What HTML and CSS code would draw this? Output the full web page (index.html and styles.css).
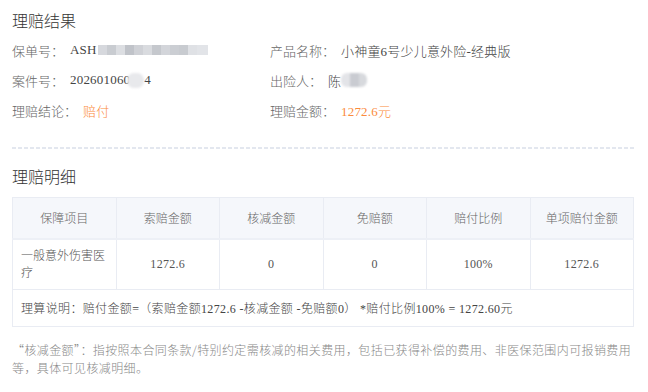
FILE: index.html
```html
<!DOCTYPE html>
<html lang="zh-CN">
<head>
<meta charset="utf-8">
<title>理赔结果</title>
<link rel="stylesheet" href="styles.css">
</head>
<body>
<div class="page">
  <h2 class="title">理赔结果</h2>
  <div class="info">
    <div class="item"><span class="label">保单号：</span><span class="value">ASH<span class="mosaic"></span></span></div>
    <div class="item"><span class="label">产品名称：</span><span class="value">小神童6号少儿意外险-经典版</span></div>
    <div class="item"><span class="label">案件号：</span><span class="value">202601060<span class="blob"></span>4</span></div>
    <div class="item"><span class="label">出险人：</span><span class="value">陈<span class="blur-name"></span></span></div>
    <div class="item"><span class="label">理赔结论：</span><span class="value orange">赔付</span></div>
    <div class="item"><span class="label">理赔金额：</span><span class="value orange">1272.6元</span></div>
  </div>
  <div class="divider"></div>
  <h2 class="title title-detail">理赔明细</h2>
  <table class="detail">
    <thead>
      <tr>
        <th>保障项目</th>
        <th>索赔金额</th>
        <th>核减金额</th>
        <th>免赔额</th>
        <th>赔付比例</th>
        <th>单项赔付金额</th>
      </tr>
    </thead>
    <tbody>
      <tr class="row">
        <td class="left">一般意外伤害医疗</td>
        <td>1272.6</td>
        <td>0</td>
        <td>0</td>
        <td>100%</td>
        <td>1272.6</td>
      </tr>
      <tr class="formula">
        <td colspan="6">理算说明：赔付金额=（索赔金额1272.6 -核减金额 -免赔额0） *赔付比例100% = 1272.60元</td>
      </tr>
    </tbody>
  </table>
  <p class="note">“核减金额”：指按照本合同条款/特别约定需核减的相关费用，包括已获得补偿的费用、非医保范围内可报销费用等，具体可见核减明细。</p>
</div>
</body>
</html>
```

FILE: styles.css
```css
html, body {
  margin: 0;
  padding: 0;
  background: #ffffff;
}

body {
  font-family: "Liberation Serif", "Noto Sans CJK SC", serif;
  font-weight: 300;
  color: #333333;
}

.page {
  padding: 10px 12px 0 12px;
  width: 624px;
}

.title {
  margin: 0;
  font-size: 16px;
  line-height: 24px;
  font-weight: 300;
  color: #333333;
}

.info {
  margin-top: 1px;
  display: grid;
  grid-template-columns: 258px 1fr;
  grid-auto-rows: 30px;
}

.item {
  display: flex;
  align-items: center;
  font-size: 13px;
  white-space: nowrap;
}

.label {
  color: #666666;
  margin-right: 6px;
}

.value {
  color: #444444;
  display: inline-flex;
  align-items: center;
  letter-spacing: 0.2px;
}

.orange {
  color: #fb8b3c;
}

.mosaic {
  display: inline-block;
  width: 110px;
  height: 10px;
  margin-left: 1px;
  background: linear-gradient(90deg,
    #d6d8dd 0 9px, #c9ccd1 9px 18px, #dcdee2 18px 27px, #c0c3c9 27px 36px,
    #cfd1d6 36px 45px, #d9dbdf 45px 54px, #c5c8cd 54px 63px, #d3d5da 63px 72px,
    #cbced3 72px 81px, #c8cbd0 81px 90px, #dfe1e5 90px 99px, #e2e4e8 99px 110px);
}

.blob {
  display: inline-block;
  width: 17px;
  height: 15px;
  margin-left: -3px;
  border-radius: 7px;
  background: #e8e9ec;
  filter: blur(1px);
}

.blur-name {
  display: inline-block;
  width: 26px;
  height: 14px;
  border-radius: 6px;
  background: linear-gradient(90deg, #e3e4e8 0 9px, #c9cbd1 9px 18px, #d7d9dd 18px 26px);
  filter: blur(1.2px);
}

.divider {
  margin-top: 22px;
  height: 2px;
  background: repeating-linear-gradient(90deg, #e3e7ef 0 4px, transparent 4px 6px);
}

.title-detail {
  margin-top: 17px;
}

.detail {
  margin-top: 7px;
  width: 622px;
  border-collapse: collapse;
  table-layout: fixed;
  font-size: 12px;
  color: #555555;
}

.detail th,
.detail td {
  border: 1px solid #e9ecf3;
  text-align: center;
  font-weight: 300;
  padding: 0 8px;
}

.detail th {
  height: 40px;
  background: #f5f7fb;
  color: #666666;
  border-bottom: 2px solid #edf0f6;
}

.detail .row td {
  height: 49px;
  line-height: 17px;
  letter-spacing: 0.3px;
}

.detail .row td.left {
  text-align: left;
  letter-spacing: 0;
}

.detail .formula td {
  height: 36px;
  text-align: left;
  padding-left: 8px;
  color: #444444;
  letter-spacing: 0.35px;
}

.note {
  margin: 14px 0 0 0;
  font-family: "Noto Sans CJK SC", "Liberation Serif", sans-serif;
  font-size: 12px;
  letter-spacing: 0.4px;
  line-height: 18px;
  color: #888888;
}
```
